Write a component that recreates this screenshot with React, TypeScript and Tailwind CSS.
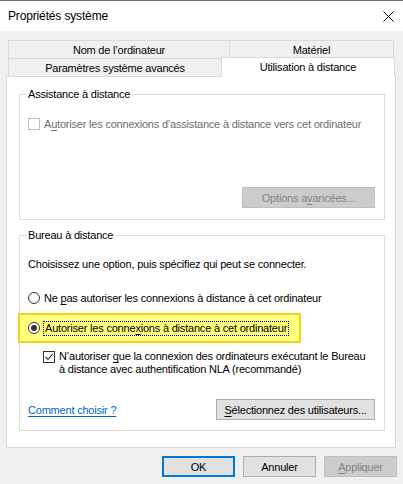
import React from "react";

function U({ children }: { children: React.ReactNode }) {
  return <span className="underline underline-offset-[2px]">{children}</span>;
}

function Radio({ checked }: { checked?: boolean }) {
  return (
    <span className="w-[12px] h-[12px] rounded-full border border-[#333333] bg-white flex items-center justify-center shrink-0">
      {checked && <span className="w-[6px] h-[6px] rounded-full bg-[#333333]" />}
    </span>
  );
}

export default function App() {
  return (
    <div className="w-[403px] h-[484px] bg-[#f0f0f0] border-t border-[#6e6e6e] flex flex-col font-['Liberation_Sans',Arial,sans-serif] text-[11px] tracking-[-0.2px] text-black leading-[14px] overflow-hidden">
      {/* Title bar */}
      <div className="h-[30px] bg-white flex items-center justify-between pl-[8px] pr-[9px] shrink-0">
        <span className="text-[12px] tracking-[-0.15px]">Propriétés système</span>
        <svg width="11" height="11" viewBox="0 0 11 11" className="mt-[1px]">
          <path d="M0.5 0.5 L10.5 10.5 M10.5 0.5 L0.5 10.5" stroke="#000" strokeWidth="1" fill="none" />
        </svg>
      </div>

      <div className="px-[6px] pt-[9px] flex flex-col">
        {/* Tabs row 1 */}
        <div className="flex pl-[2px] h-[18px]">
          <div className="w-[222px] h-[18px] bg-[#f0f0f0] border-t border-l border-r border-[#d9d9d9] flex items-center justify-center">
            Nom de l’ordinateur
          </div>
          <div className="w-[165px] -ml-px h-[18px] bg-[#f0f0f0] border-t border-l border-r border-[#d9d9d9] flex items-center justify-center">
            Matériel
          </div>
        </div>
        {/* Tabs row 2 */}
        <div className="flex pl-[2px] h-[18px] items-end">
          <div className="w-[214px] h-[18px] bg-[#f0f0f0] border-t border-l border-r border-[#d9d9d9] flex items-center justify-center pt-[1px]">
            Paramètres système avancés
          </div>
          <div className="relative z-10 w-[174px] -ml-px h-[20px] -mb-px bg-white border-t border-l border-r border-[#d9d9d9] flex items-center justify-center pb-[2px]">
            Utilisation à distance
          </div>
        </div>

        {/* Page */}
        <div className="w-[390px] h-[372px] bg-white border border-[#d9d9d9] pl-[12px] pr-[10px] pt-[10px]">
          {/* Group 1 */}
          <fieldset className="border border-[#dcdcdc] pl-[8px] pr-[9px] pb-[11px]">
            <legend className="-ml-[2px] px-[2px] leading-[14px]">Assistance à distance</legend>
            <div className="flex items-center h-[14px] mt-[16px]">
              <span className="w-[12px] h-[12px] border border-[#bcbcbc] bg-white shrink-0" />
              <span className="ml-[4px] text-[#6d6d6d]">
                A<U>u</U>toriser les connexions d’assistance à distance vers cet ordinateur
              </span>
            </div>
            <div className="flex justify-end mt-[56px]">
              <div className="w-[133px] h-[21px] bg-[#cccccc] border border-[#bfbfbf] text-[#838383] flex items-center justify-center">
                Options a<U>v</U>ancées...
              </div>
            </div>
          </fieldset>

          {/* Group 2 */}
          <fieldset className="mt-[8px] border border-[#dcdcdc] pl-[8px] pr-[9px] pb-[10px]">
            <legend className="-ml-[2px] px-[2px] leading-[14px]">Bureau à distance</legend>
            <div className="h-[14px] mt-[15px] flex items-center">
              Choisissez une option, puis spécifiez qui peut se connecter.
            </div>
            <div className="h-[14px] mt-[20px] flex items-center">
              <Radio />
              <span className="ml-[4px]">
                Ne <U>p</U>as autoriser les connexions à distance à cet ordinateur
              </span>
            </div>
            <div className="relative h-[14px] mt-[16px] flex items-center">
              <div className="absolute left-[-10px] top-[-8px] w-[283px] h-[30px] bg-[#ffff80] border-2 border-[#f3d21c]" />
              <span className="relative flex items-center">
                <Radio checked />
                <span className="ml-[3px] px-[1px] border border-dotted border-black leading-[13px]">
                  Autoriser les conne<U>x</U>ions à distance à cet ordinateur
                </span>
              </span>
            </div>
            <div className="flex mt-[15px] pl-[15px]">
              <span className="w-[12px] h-[12px] border border-[#333333] bg-white shrink-0 flex items-center justify-center mt-[1px]">
                <svg width="10" height="10" viewBox="0 0 10 10">
                  <path d="M1.5 5 L4 7.5 L8.8 1.8" stroke="#333" strokeWidth="1.1" fill="none" />
                </svg>
              </span>
              <span className="ml-[4px] leading-[13px]">
                N’autoriser <U>q</U>ue la connexion des ordinateurs exécutant le Bureau
                <br />à distance avec authentification NLA (recommandé)
              </span>
            </div>
            <div className="flex items-center justify-between mt-[23px]">
              <span className="text-[#0066cc] underline underline-offset-[2px]">Comment choisir ?</span>
              <div className="w-[159px] h-[21px] bg-[#e1e1e1] border border-[#adadad] flex items-center justify-center">
                <U>S</U>électionnez des utilisateurs...
              </div>
            </div>
          </fieldset>
        </div>

        {/* Bottom buttons */}
        <div className="flex justify-end gap-[8px] mt-[8px]">
          <div className="w-[73px] h-[21px] bg-[#e1e1e1] border-2 border-[#0078d7] flex items-center justify-center">
            OK
          </div>
          <div className="w-[73px] h-[21px] bg-[#e1e1e1] border border-[#adadad] flex items-center justify-center">
            Annuler
          </div>
          <div className="w-[73px] h-[21px] bg-[#cccccc] border border-[#bfbfbf] text-[#838383] flex items-center justify-center">
            <U>A</U>ppliquer
          </div>
        </div>
      </div>
    </div>
  );
}
